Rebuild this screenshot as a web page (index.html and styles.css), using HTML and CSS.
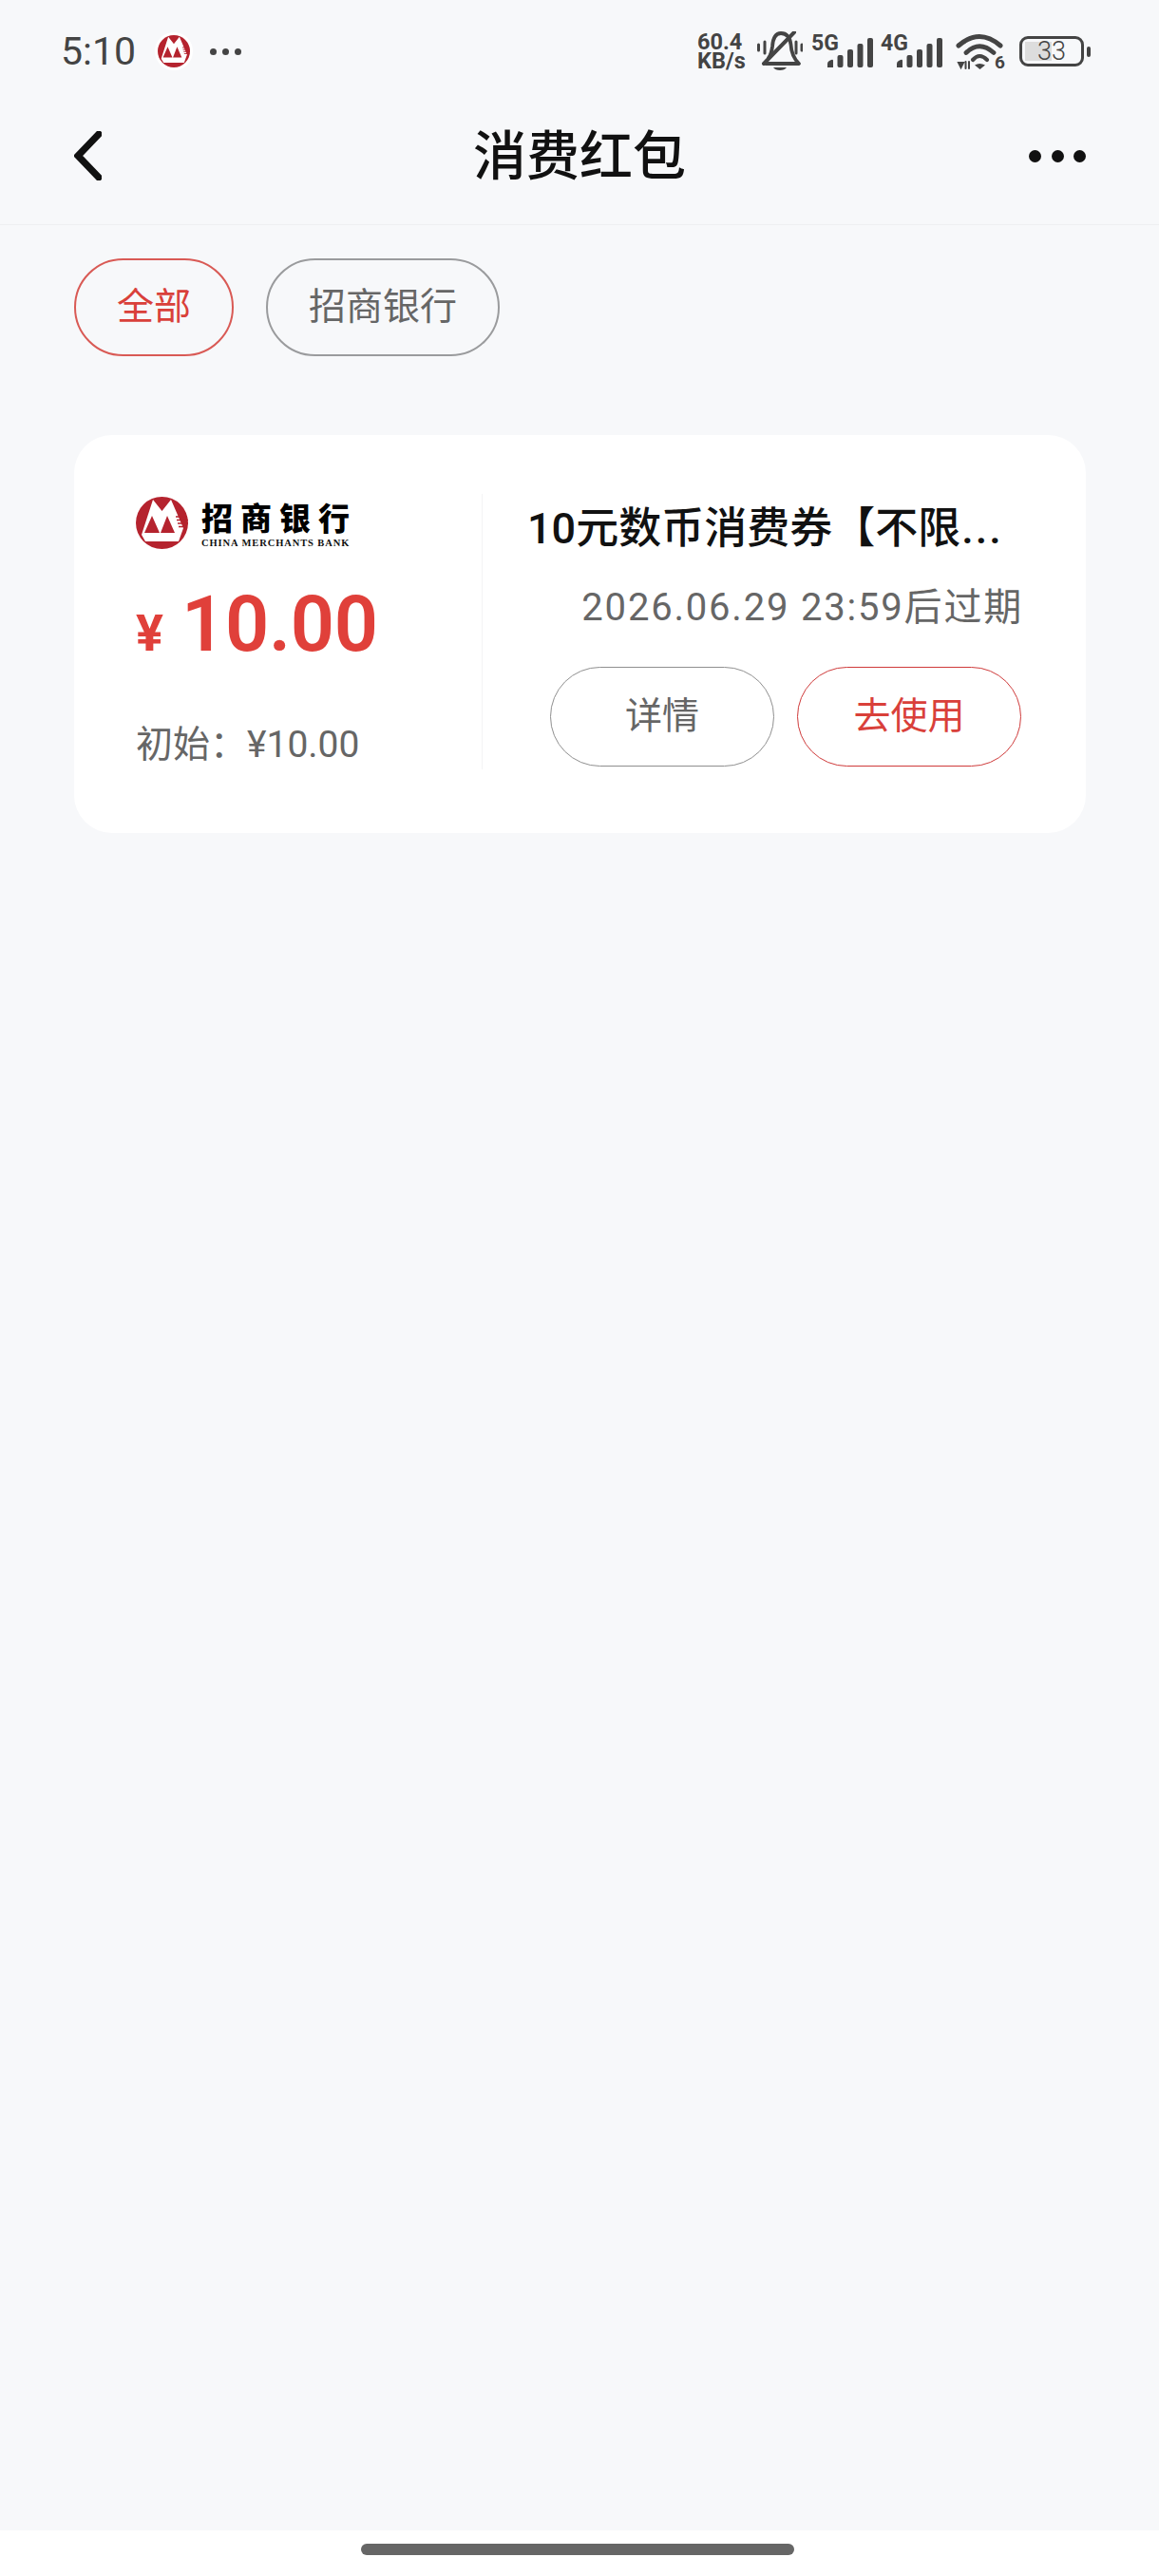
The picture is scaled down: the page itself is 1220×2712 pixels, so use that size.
FILE: index.html
```html
<!DOCTYPE html>
<html lang="zh-CN">
<head>
<meta charset="utf-8">
<title>消费红包</title>
<link rel="stylesheet" href="styles.css">
</head>
<body>
<svg class="defs" width="0" height="0" aria-hidden="true">
  <symbol id="cmb" viewBox="0 0 55 55">
    <circle cx="27.5" cy="27.5" r="27.5" fill="#b5232e"/>
    <path d="M6 40 18 3 27.5 15 37 3 50 33 45 47H10Z" fill="#fff"/>
    <path d="M17 20 25 38H9ZM33 20 41 38H26Z" fill="#b5232e"/>
    <path d="M42 21H54M43 24.500H55M44 28H55M45 31.500H54" stroke="#b5232e" stroke-width="1.400"/>
  </symbol>
  <symbol id="bars" viewBox="0 0 48 32">
    <g fill="#444">
      <path d="M0 32v-4q0-2 2-3l2-1q2-1 2 1v7Z"/>
      <rect x="10.500" y="19" width="6" height="13" rx="2"/>
      <rect x="21" y="13" width="6" height="19" rx="2"/>
      <rect x="31.500" y="7" width="6" height="25" rx="2"/>
      <rect x="42" y="1" width="6" height="31" rx="2"/>
    </g>
  </symbol>
</svg>
<div class="screen">
  <div class="status">
    <div class="status-left">
      <span class="time">5:10</span>
      <span class="app-chip"><svg class="app-icon"><use href="#cmb"/></svg></span>
      <span class="status-dots"><i></i><i></i><i></i></span>
    </div>
    <div class="status-right">
      <span class="speed"><b>60.4</b><b>KB/s</b></span>
      <svg class="bell" viewBox="0 0 48 41" fill="none" stroke="#444" stroke-linecap="round">
        <path d="M12 28Q15 24 16 16 17 2 25 2 34 2 35.500 14 36 26 44 34H9" stroke-width="3.800" stroke-linejoin="round"/>
        <path d="M39 1 7 34" stroke-width="4"/>
        <path d="M1.500 14v6M8 11v12M41 11v12M47 14v6" stroke-width="3"/>
        <path d="M17 38H31Q29 41 24 41 19 41 17 38Z" fill="#444" stroke="none"/>
      </svg>
      <span class="net"><em class="net-label">5G</em><svg class="bars"><use href="#bars"/></svg></span>
      <span class="net"><em class="net-label">4G</em><svg class="bars"><use href="#bars"/></svg></span>
      <svg class="wifi" viewBox="0 0 52 42" fill="none" stroke="#444" stroke-linecap="round" stroke-width="5">
        <path d="M3 13Q25-6 47 13"/>
        <path d="M11 20.500Q25 7 40 20.500" stroke-width="4.800"/>
        <path d="M18 28Q25 20 33 28" stroke-width="4.200"/>
        <path d="M20 33.500Q25 30.500 31 33.500L25.500 38Z" fill="#444" stroke="none"/>
        <path d="M3 31h5l-2.500 5ZM10.500 30v7M14 37v-7" fill="#444" stroke-width="2"/>
        <text x="41" y="37" class="wifi-six">6</text>
      </svg>
      <span class="battery-wrap">
        <span class="battery"><span class="battery-fill"></span><span class="battery-num">33</span></span>
        <span class="battery-nub"></span>
      </span>
    </div>
  </div>

  <header class="nav">
    <svg class="back" viewBox="0 0 28 50" fill="none" stroke="#111" stroke-width="7" stroke-linecap="round" stroke-linejoin="miter"><path d="M25 3 4 25l21 22"/></svg>
    <h1 class="nav-title">消费红包</h1>
    <span class="more"><i></i><i></i><i></i></span>
  </header>

  <main class="content">
    <div class="filters">
      <button class="chip chip-active">全部</button>
      <button class="chip">招商银行</button>
    </div>

    <section class="card">
      <div class="card-left">
        <div class="brand">
          <svg class="brand-mark"><use href="#cmb"/></svg>
          <div class="brand-text">
            <div class="brand-cn">招商银行</div>
            <div class="brand-en">CHINA MERCHANTS BANK</div>
          </div>
        </div>
        <div class="amount"><span class="amount-cur">¥</span><span class="amount-num">10.00</span></div>
        <div class="initial">初始：¥10.00</div>
      </div>
      <div class="card-right">
        <div class="coupon-title">10元数币消费券【不限<span class="title-dots">...</span></div>
        <div class="coupon-date">2026.06.29 23:59后过期</div>
        <div class="actions">
          <button class="btn">详情</button>
          <button class="btn btn-primary">去使用</button>
        </div>
      </div>
    </section>
  </main>

  <footer class="home"><span class="home-bar"></span></footer>
</div>
</body>
</html>
```

FILE: styles.css
```css
* { box-sizing: border-box; }
html, body { margin: 0; padding: 0; }
body {
  background: #f7f8fa;
  font-family: Roboto, "Noto Sans CJK SC", sans-serif;
}
.defs { position: absolute; }
.screen { display: flex; flex-direction: column; height: 2712px; width: 1220px; overflow: hidden; }

/* status bar */
.status { height: 110px; display: flex; justify-content: space-between; align-items: flex-start; padding: 33px 72px 0 64px; color: #444; }
.status-left { display: flex; align-items: center; height: 42px; }
.time { font-size: 41px; line-height: 42px; width: 99px; color: #444; }
.app-chip { width: 40px; height: 40px; background: #fff; border-radius: 50%; display: flex; align-items: center; justify-content: center; }
.app-icon { width: 34px; height: 34px; display: block; }
.status-dots { display: flex; gap: 6px; margin-left: 18px; }
.status-dots i { width: 7px; height: 7px; background: #444; border-radius: 50%; display: block; }
.status-right { display: flex; align-items: flex-start; }
.speed { display: flex; flex-direction: column; width: 63px; font-size: 23.500px; line-height: 20px; color: #444; margin-top: 1px; }
.speed b { display: block; font-weight: 700; white-space: nowrap; }
.bell { width: 48px; height: 41px; display: block; margin-top: 0; }
.net { width: 65px; height: 36px; margin-left: 9px; margin-top: 4px; display: flex; position: relative; }
.net + .net { margin-left: 8px; }
.net-label { position: absolute; left: 0; top: -1px; font-style: normal; font-weight: 700; font-size: 23px; line-height: 20px; color: #444; }
.bars { width: 48px; height: 32px; display: block; position: absolute; left: 17px; top: 2px; }
.wifi { width: 52px; height: 42px; display: block; margin-left: 14px; margin-top: 2px; }
.wifi-six { font: 700 19px Roboto, sans-serif; fill: #444; stroke: none; }
.battery-wrap { display: flex; align-items: center; margin-left: 15px; margin-top: 5px; }
.battery { width: 68px; height: 32px; border: 3.500px solid #444; border-radius: 9px; display: flex; align-items: center; justify-content: center; position: relative; overflow: hidden; }
.battery-fill { position: absolute; left: 3px; top: 3px; bottom: 3px; width: 28px; background: #ddd; }
.battery-num { position: relative; font-size: 27px; line-height: 25px; font-weight: 300; color: #444; }
.battery-nub { width: 4px; height: 11px; background: #444; border-radius: 2px; margin-left: 3px; }

/* nav */
.nav { height: 127px; flex: none; border-bottom: 1px solid #eeeff1; display: flex; align-items: center; justify-content: space-between; padding: 0 77px 18px 78px; position: relative; }
.back { width: 29px; height: 52px; display: block; }
.nav-title { position: absolute; left: 0; right: 0; top: 0; margin: 0; text-align: center; font-size: 56px; line-height: 110px; font-weight: 500; color: #111; pointer-events: none; }
.more { display: flex; gap: 10.500px; }
.more i { width: 13px; height: 13px; background: #111; border-radius: 50%; display: block; }

/* content */
.content { flex: 1; padding: 35px 77px 0 78px; }
.filters { display: flex; gap: 34px; }
.chip { height: 103px; padding: 0 43px; border-radius: 52px; border: 2px solid #9a9b9d; background: transparent; font: 400 39px/1 Roboto, "Noto Sans CJK SC", sans-serif; color: #666; }
.chip-active { border-color: #d95a55; color: #d9403a; }

.card { margin-top: 83px; height: 419px; background: #fff; border-radius: 40px; padding: 62px 68px 0 65px; display: flex; }
.card-left { width: 365px; height: 290px; flex: none; border-right: 1px solid #f4f4f5; padding-top: 3px; }
.brand { display: flex; gap: 14px; }
.brand-mark { width: 55px; height: 55px; display: block; }
.brand-text { padding-top: 6px; width: 160px; }
.brand-cn { font-size: 33px; line-height: 35px; font-weight: 900; letter-spacing: 8px; color: #000; white-space: nowrap; }
.brand-en { font: 700 10.500px/12px "Liberation Serif", serif; color: #111; white-space: nowrap; margin-top: 2px; letter-spacing: .9px; }
.amount { display: flex; align-items: baseline; margin-top: 34px; color: #e0403a; height: 92px; }
.amount-cur { font-size: 54px; font-weight: 700; width: 48px; line-height: 92px; }
.amount-num { font-size: 81px; line-height: 92px; font-weight: 600; letter-spacing: -.3px; }
.initial { margin-top: 55px; font-size: 39px; line-height: 50px; color: #666; }

.card-right { flex: 1; padding-left: 47px; min-width: 0; display: flex; flex-direction: column; }
.coupon-title { font-size: 45px; line-height: 54px; font-weight: 500; color: #111; white-space: nowrap; margin-top: 10px; }
.title-dots { letter-spacing: 2px; margin-left: 1px; }
.coupon-date { margin-top: 31px; text-align: right; font-size: 40px; line-height: 50px; color: #666; letter-spacing: 1.800px; white-space: nowrap; margin-right: -2px; }
.actions { display: flex; justify-content: flex-end; gap: 24px; margin-top: 37px; }
.btn { width: 236px; height: 105px; border-radius: 53px; border: 1px solid #8f8f8f; background: #fff; font: 400 39px/1 Roboto, "Noto Sans CJK SC", sans-serif; color: #666; }
.btn-primary { border-color: #cf3a3a; color: #d9403a; }

/* home indicator */
.home { height: 48px; flex: none; background: #fff; display: flex; justify-content: center; padding: 14px 0 0 0; }
.home-bar { width: 456px; height: 12px; background: #666; border-radius: 6px; display: block; margin-left: -4px; }
```
